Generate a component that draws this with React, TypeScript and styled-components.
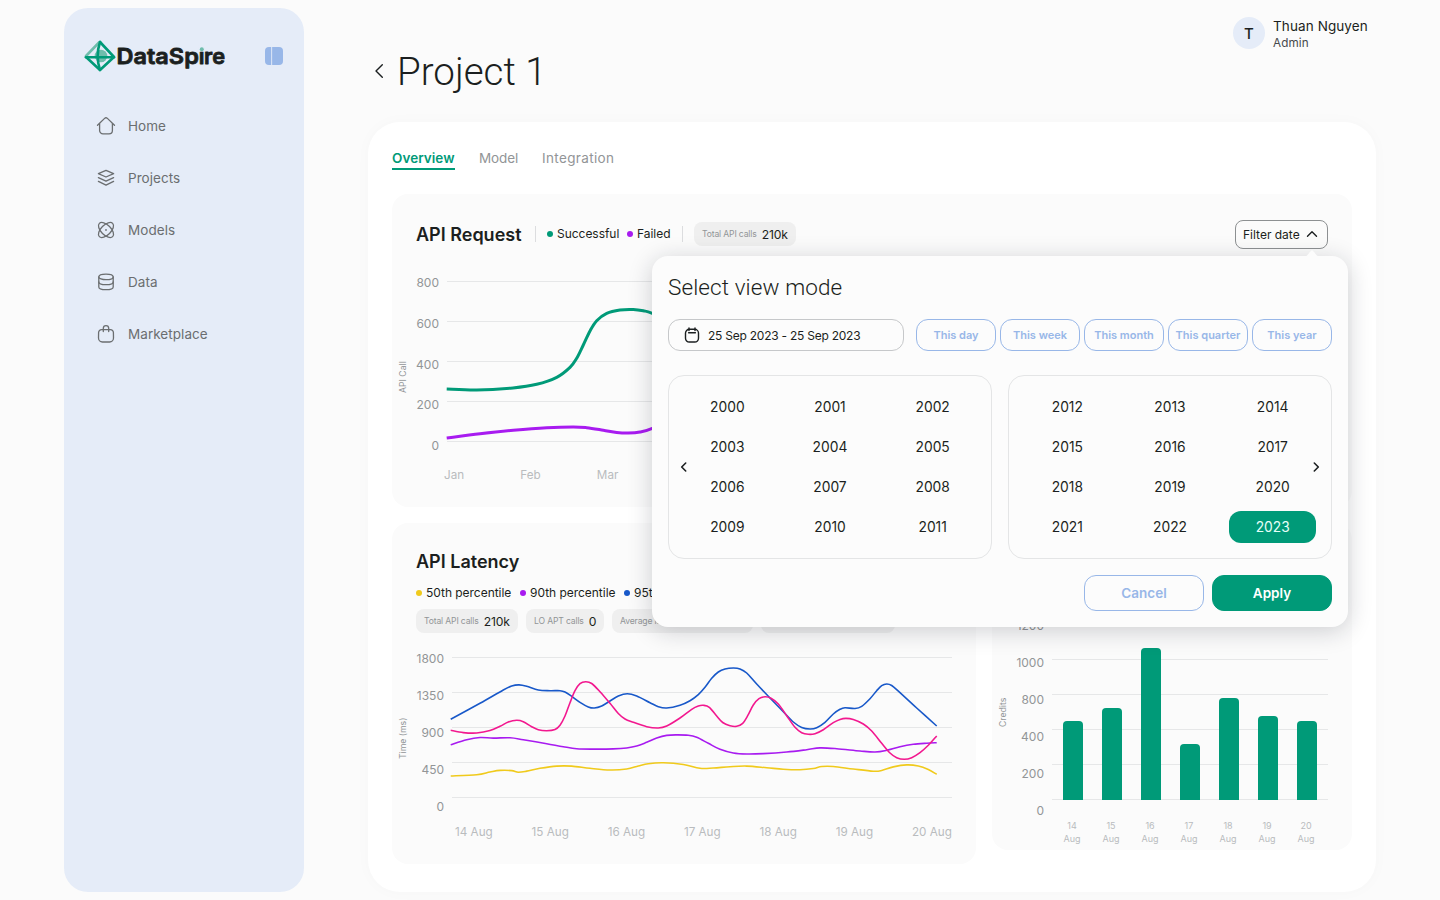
import React from "react";
import styled, { createGlobalStyle, css } from "styled-components";

const c = {
  page: "#fbfbfb",
  ink: "#1b1f20",
  nav: "#6b6e70",
  muted: "#929597",
  faint: "#b9bcbe",
  line: "#e6e7e8",
  green: "#009a78",
  sky: "#98b7e8",
  side: "#e5ecf8",
  purple: "#a81bf0",
  blue: "#1858c9",
  pink: "#f2188f",
  yellow: "#f0ca1c",
};

const GlobalStyle = createGlobalStyle`
  *, *::before, *::after { box-sizing: border-box; }
  html, body { margin: 0; background: ${c.page}; }
  body {
    font-family: Inter, Roboto, "Liberation Sans", sans-serif;
    color: ${c.ink};
    width: 1440px;
    height: 900px;
    overflow: hidden;
  }
  button { font: inherit; color: inherit; background: none; border: 0; padding: 0; margin: 0; }
`;

/* ---------- shell ---------- */

const Shell = styled.div`
  display: flex;
  gap: 64px;
  width: 1440px;
  height: 900px;
  padding: 8px 64px;
`;

const Sidebar = styled.aside`
  width: 240px;
  height: 884px;
  border-radius: 24px;
  background: ${c.side};
  flex: none;
`;

const Brand = styled.div`
  display: flex;
  align-items: center;
  justify-content: space-between;
  height: 32px;
  margin: 32px 20px 0 20px;
`;

const Nav = styled.nav`
  display: flex;
  flex-direction: column;
  gap: 20px;
  margin-top: 38px;
`;

const NavItem = styled.a`
  display: flex;
  align-items: center;
  gap: 12px;
  height: 32px;
  padding-left: 32px;
  font-size: 13.5px;
  letter-spacing: 0.05px;
  color: ${c.nav};
`;

const Main = styled.main`
  width: 1008px;
  flex: none;
`;

const TopBar = styled.header`
  display: flex;
  justify-content: flex-end;
  height: 42px;
  padding: 9px 8px 0 0;
`;

const User = styled.div`
  display: flex;
  gap: 8px;
  width: 135px;
`;

const Avatar = styled.div`
  display: flex;
  align-items: center;
  justify-content: center;
  width: 32px;
  height: 32px;
  border-radius: 50%;
  background: ${c.side};
  font-size: 15px;
  font-weight: 500;
  flex: none;
`;

const UserText = styled.div`
  display: flex;
  flex-direction: column;
  white-space: nowrap;
`;

const UserName = styled.span`
  font-size: 13.5px;
  line-height: 19px;
  letter-spacing: 0.1px;
`;

const UserRole = styled.span`
  font-size: 11.7px;
  line-height: 14px;
  letter-spacing: 0.1px;
  color: #46494b;
`;

const TitleRow = styled.div`
  display: flex;
  align-items: center;
  gap: 13px;
  height: 42px;
  padding-left: 6px;
  margin-bottom: 30px;
`;

const PageTitle = styled.h1`
  margin: 0;
  padding-top: 1px;
  font-family: Roboto, sans-serif;
  font-size: 38.5px;
  font-weight: 300;
  line-height: 42px;
`;

const Panel = styled.section`
  height: 770px;
  padding: 24px;
  border-radius: 32px;
  background: #fff;
  box-shadow: 0 0 16px rgba(0, 0, 0, 0.025);
`;

const Tabs = styled.div`
  display: flex;
  gap: 24px;
  height: 24px;
  margin-bottom: 24px;
`;

const Tab = styled.button<{ $active?: boolean; $w: number; $ls?: number }>`
  width: ${(p) => p.$w}px;
  height: 24px;
  padding-top: 2px;
  font-size: 13.5px;
  line-height: 20px;
  letter-spacing: ${(p) => p.$ls ?? 0}px;
  text-align: left;
  white-space: nowrap;
  color: ${(p) => (p.$active ? c.green : c.muted)};
  font-weight: ${(p) => (p.$active ? 600 : 400)};
  border-bottom: 2px solid ${(p) => (p.$active ? c.green : "transparent")};
`;

/* ---------- cards ---------- */

const Cards = styled.div`
  display: grid;
  grid-template-columns: 584px 360px;
  gap: 16px;
  align-items: start;
`;

const Card = styled.article<{ $h: number; $wide?: boolean }>`
  height: ${(p) => p.$h}px;
  padding: 24px 24px 0;
  border-radius: 16px;
  background: ${c.page};
  ${(p) => p.$wide && css`grid-column: 1 / -1;`}
`;

const CardTitle = styled.h2<{ $w?: number }>`
  margin: 0;
  width: ${(p) => (p.$w ? `${p.$w}px` : "auto")};
  font-size: 18px;
  font-weight: 600;
  line-height: 30px;
  white-space: nowrap;
`;

const CardHead = styled.div`
  display: flex;
  align-items: center;
  height: 32px;
  ${CardTitle} { line-height: 31px; }
`;

const Rule = styled.i`
  width: 1px;
  height: 16px;
  margin-right: 11px;
  background: #dcdddf;
`;

const Legend = styled.div<{ $top?: number }>`
  display: flex;
  gap: 8px;
  margin-top: ${(p) => p.$top ?? 0}px;
`;

const Key = styled.span<{ $color: string; $w: number }>`
  display: flex;
  align-items: center;
  gap: 4px;
  width: ${(p) => p.$w}px;
  font-size: 12px;
  line-height: 16px;
  letter-spacing: -0.03px;
  white-space: nowrap;
  &::before {
    content: "";
    width: 6px;
    height: 6px;
    border-radius: 50%;
    background: ${(p) => p.$color};
    flex: none;
  }
`;

const Chip = styled.span<{ $w: number }>`
  display: flex;
  align-items: center;
  gap: 5px;
  width: ${(p) => p.$w}px;
  height: 24px;
  padding-left: 8px;
  border-radius: 8px;
  background: #efefef;
  font-size: 8.6px;
  letter-spacing: -0.15px;
  color: ${c.muted};
  white-space: nowrap;
  b {
    font-size: 12.2px;
    font-weight: 400;
    color: ${c.ink};
  }
`;

const FilterButton = styled.button`
  display: flex;
  align-items: center;
  justify-content: space-between;
  width: 93px;
  height: 29px;
  margin-left: auto;
  padding: 0 9px 0 7px;
  border: 1px solid #8d9092;
  border-radius: 8px;
  font-size: 12px;
  white-space: nowrap;
`;

const ChartRow = styled.div<{ $top: number }>`
  display: flex;
  margin: ${(p) => p.$top}px -24px 0 -24px;
`;

const AxisTitle = styled.div<{ $h: number }>`
  width: 24px;
  height: ${(p) => p.$h}px;
  padding-right: 1px;
  writing-mode: vertical-rl;
  transform: rotate(180deg);
  text-align: center;
  font-size: 8.7px;
  line-height: 21px;
  color: ${c.muted};
`;

const Ticks = styled.div<{ $w: number; $step: number }>`
  width: ${(p) => p.$w}px;
  margin-right: 8px;
  text-align: right;
  font-size: 12px;
  line-height: ${(p) => p.$step}px;
  color: ${c.muted};
  span { display: block; height: ${(p) => p.$step}px; }
`;

const Plot = styled.svg<{ $top: number }>`
  display: block;
  margin-top: ${(p) => p.$top}px;
  overflow: visible;
  fill: none;
`;

const Days = styled.div<{ $left: number; $right: number; $top: number }>`
  display: flex;
  justify-content: space-between;
  margin: ${(p) => p.$top}px ${(p) => p.$right}px 0 ${(p) => p.$left}px;
  font-size: 11.7px;
  line-height: 16px;
  color: ${c.faint};
`;

const BarDays = styled.div`
  display: flex;
  margin: 19px 0 0 0.5px;
  span {
    width: 39px;
    text-align: center;
    font-size: 9px;
    line-height: 13px;
    color: ${c.faint};
  }
`;

/* ---------- popover ---------- */

const Popover = styled.div`
  position: absolute;
  left: 652px;
  top: 256px;
  width: 696px;
  height: 371px;
  padding: 16px;
  border-radius: 16px;
  background: #fcfcfc;
  box-shadow: 0 4px 24px rgba(20, 24, 40, 0.2);
`;

const Pointer = styled.svg`
  position: absolute;
  right: 27px;
  top: -6px;
`;

const PopTitle = styled.h3`
  margin: 0 0 16px;
  font-family: Roboto, sans-serif;
  font-size: 22.5px;
  font-weight: 300;
  line-height: 31px;
  letter-spacing: 0.1px;
`;

const Row = styled.div<{ $gap: number; $top?: number; $bottom?: number; $end?: boolean }>`
  display: flex;
  gap: ${(p) => p.$gap}px;
  margin: ${(p) => p.$top ?? 0}px 0 ${(p) => p.$bottom ?? 0}px;
  justify-content: ${(p) => (p.$end ? "flex-end" : "flex-start")};
`;

const DateField = styled.div`
  display: flex;
  align-items: center;
  gap: 8px;
  width: 236px;
  height: 32px;
  margin-right: 8px;
  padding-left: 15px;
  border: 1px solid #c6c8ca;
  border-radius: 12px;
  font-size: 12px;
  letter-spacing: -0.24px;
  line-height: 15px;
  white-space: nowrap;
`;

const Preset = styled.button`
  width: 80px;
  height: 32px;
  border: 1px solid ${c.sky};
  border-radius: 12px;
  color: ${c.sky};
  font-size: 11px;
  font-weight: 600;
  white-space: nowrap;
`;

const YearPanel = styled.div`
  position: relative;
  display: grid;
  grid-template-columns: repeat(3, 1fr);
  gap: 8px 16px;
  width: 324px;
  height: 184px;
  padding: 15px;
  border: 1px solid #e4e5e6;
  border-radius: 16px;
  align-content: start;
`;

const Year = styled.button<{ $on: boolean }>`
  height: 32px;
  border-radius: 12px;
  font-size: 13.8px;
  color: ${(p) => (p.$on ? "#e6fff8" : c.ink)};
  background: ${(p) => (p.$on ? c.green : "transparent")};
`;

const Pager = styled.button<{ $side: "left" | "right" }>`
  position: absolute;
  top: 85px;
  ${(p) => p.$side}: 10px;
  display: flex;
  width: 10px;
  height: 12px;
`;

const Action = styled.button<{ $primary?: boolean }>`
  width: 120px;
  height: 36px;
  border-radius: 12px;
  border: 1px solid ${(p) => (p.$primary ? c.green : c.sky)};
  background: ${(p) => (p.$primary ? c.green : "transparent")};
  color: ${(p) => (p.$primary ? "#fff" : c.sky)};
  font-size: 13.5px;
  font-weight: 600;
`;

/* ---------- drawings ---------- */

const NavIcon = ({ children }: { children: React.ReactNode }) => (
  <svg width="20" height="20" viewBox="0 0 20 20" fill="none" stroke={c.nav} strokeWidth="1.3" strokeLinecap="round" strokeLinejoin="round">
    {children}
  </svg>
);

const nav: [string, React.ReactNode][] = [
  ["Home", <><path d="M1.5 9.3 8.6 2.4a2 2 0 0 1 2.8 0l7.1 6.9" /><path d="M3.6 7.6v6.9a3.4 3.4 0 0 0 3.4 3.4h6a3.4 3.4 0 0 0 3.4-3.4V7.6" /></>],
  ["Projects", <><path d="M10 2.4 17.6 5.7 10 9 2.4 5.7z" /><path d="m2.4 9.6 7.6 3.6 7.6-3.6" /><path d="m2.4 13.4 7.6 3.8 7.6-3.8" /></>],
  ["Models", <><ellipse cx="10" cy="10" rx="9.4" ry="5" transform="rotate(45 10 10)" /><ellipse cx="10" cy="10" rx="9.4" ry="5" transform="rotate(-45 10 10)" /><circle cx="10" cy="10" r=".3" /></>],
  ["Data", <><ellipse cx="10" cy="4.9" rx="7.2" ry="2.7" /><path d="M2.8 4.9v10c0 1.5 3.2 2.7 7.2 2.7s7.2-1.2 7.2-2.7v-10" /><path d="M2.8 10c0 1.5 3.2 2.7 7.2 2.7s7.2-1.2 7.2-2.7" /></>],
  ["Marketplace", <><path d="M5.6 5.6h8.8a3 3 0 0 1 3 3l.1 5.5a3.9 3.9 0 0 1-3.9 3.9H6.4a3.9 3.9 0 0 1-3.9-3.9l.1-5.5a3 3 0 0 1 3-3z" /><path d="M7.3 7.6V4.3a2.7 2.7 0 0 1 5.4 0v3.3" /></>],
];

const LogoSvg = styled.svg`
  overflow: visible;
  flex: none;
  text {
    font-family: Inter, sans-serif;
    font-size: 22px;
    font-weight: 600;
  }
`;

const Logo = () => (
  <LogoSvg width="144" height="32" viewBox="84 40 144 32">
    <circle cx="101" cy="56" r="6.3" fill="#6fbdac" />
    <g fill="none" strokeWidth="2.6" strokeLinejoin="round" strokeLinecap="round">
      <path d="M86 57 100 70 114 57 100 42" stroke={c.green} />
      <path d="M86 56 99 42.5" stroke="#6fbdac" />
      <path d="M86 57.2h28" stroke={c.green} />
      <path d="M100 42c-3 9-3 19 0 28" stroke={c.green} />
    </g>
    <text y="64.4" fill={c.ink} stroke={c.ink} strokeWidth=".8" strokeLinejoin="round">
      <tspan x="116.5" textLength="82.3" lengthAdjust="spacingAndGlyphs">DataSp</tspan>
      <tspan x="198.8">i</tspan>
      <tspan x="204" textLength="21" lengthAdjust="spacingAndGlyphs">re</tspan>
    </text>
    <rect x="198.8" y="45" width="5.8" height="6.4" fill={c.side} />
    <circle cx="201.8" cy="49.3" r="2" fill="#6fbdac" />
  </LogoSvg>
);

const ToggleSvg = styled.svg`
  margin-right: 1px;
  flex: none;
`;

const Toggle = () => (
  <ToggleSvg width="18" height="18" viewBox="0 0 18 18" fill={c.sky}>
    <path d="M6.2 0v18H4a4 4 0 0 1-4-4V4a4 4 0 0 1 4-4z" />
    <path d="M7.1 0H14a4 4 0 0 1 4 4v10a4 4 0 0 1-4 4H7.1z" />
  </ToggleSvg>
);

type Pt = [number, number];

/* Catmull-Rom spline through the samples, written as cubic segments. */
const smooth = (flat: number[]) => {
  const p: Pt[] = [];
  for (let i = 0; i < flat.length; i += 2) p.push([flat[i], flat[i + 1]]);
  let d = `M${p[0][0]} ${p[0][1]}`;
  for (let i = 0; i < p.length - 1; i++) {
    const a = p[i - 1] || p[i], b = p[i], e = p[i + 1], f = p[i + 2] || e;
    d += `C${b[0] + (e[0] - a[0]) / 6} ${b[1] + (e[1] - a[1]) / 6} ${e[0] - (f[0] - b[0]) / 6} ${e[1] - (f[1] - b[1]) / 6} ${e[0]} ${e[1]}`;
  }
  return d;
};

const success = [446.7,388.9,476.7,390,513,387.9,536.7,384.3,556.7,377.3,570,367.3,576.7,358.3,583.3,345,590,331,596.7,320.7,606.7,313.3,620,310,633.3,309.5,643.3,310.8,652.3,313.3,680,326,730,350];
const failed = [446.7,438,480,433.8,513.3,430.3,546.7,427.7,573.3,426.9,586.7,427.7,603.3,430.2,616.7,432.4,628.3,433,640,432,652.3,428.3,680,415,730,400];

const p95 = [450.7,719.3,480,703.3,503.3,690,511.7,686,519,684.9,526.7,686.3,538.3,690,550,690.7,560,690.7,565,692,571.7,696.3,580,702.3,588.3,706.9,594.3,708,601.7,706,610,701,618.3,696,627.3,693.7,636.7,696,650,702.7,658.3,706.7,666.7,708,680,705.2,690,700.7,698.3,694.6,705,687.3,711.7,678.3,718.3,672,725,669,733.3,668,740,668.9,746.7,673,756.7,684,770,698,783.3,711.7,793.3,722,801.7,727.4,810,729,816.7,727.7,825,722.3,833.3,714,840,709.3,845,707.8,855,708.5,861.7,706.3,870,698.7,876.7,690.7,881.7,685.7,886.7,684,891.7,685.5,900,692.7,916.7,708,936.7,726];
const p99 = [450.7,730.3,463.3,732.6,476.7,733,490,730.6,500,726.3,508.3,722,516.7,720.3,523.3,721.7,531.7,726.7,538.3,729.7,546.7,730.7,555,729.5,560,725.3,565,716,570,702.7,575,690.7,580,683.7,585.7,681.8,591.7,683.5,600,691.7,610,703.3,618.3,713.5,625,719,633.3,722.3,646.7,726.7,658.3,728,666.7,726,680,718,691.7,709.3,698.3,706,703.3,705.3,709.3,707.3,716.7,716,722.7,722.5,730,725.7,736.7,726.3,742.7,723.3,747.7,715.7,753.3,705,759,698.7,765,696.8,771,698.2,778.3,704,786.7,715.7,795,727.3,801.7,732.7,808.3,734.3,815,733.7,823.3,729.7,833.3,722.6,840,719.4,846,718.4,853.3,719.5,863.3,724,871.7,731,881.7,743.3,890,753,896.7,757.7,904.3,759.3,911.7,757.7,920,752.7,928.3,745.3,936.7,736];
const p90 = [450.7,744.7,466.7,739.7,480,737.5,493.3,738.1,510,737.8,523.3,739.7,546.7,743.7,563.3,746.7,576.7,748.7,593.3,749.1,613.3,748.9,626.7,748,636.7,746.1,646.7,742.3,656.7,738,666.7,735.4,676.7,734.9,688.3,735.3,696.7,737.3,708.3,743.3,720,749.3,733.3,753,746.7,754,763.3,753.6,786.7,752,806.7,749.7,820,747.9,836.7,748.7,860,751,875,752,886.7,750.3,900,746.7,913.3,744.3,926.7,743.2,936.7,742.7];
const p50 = [450.7,776,476.7,774.7,490,772,500,770.4,511.7,770.6,518.3,772.2,526.7,771.1,540,768.3,556.7,766.1,571.7,766.1,590,768.3,610,770,626.7,769,638.3,766,648.3,763.7,663.3,762.8,683.3,764.5,700,768.3,713.3,768,730,766.7,746.7,766.1,766.7,767.7,783.3,769.2,800,769.7,813.3,768.5,821.7,766.5,833.3,766.5,853.3,769,873.3,771.2,881.7,770.5,893.3,766.9,906.7,764.9,918.3,766,928.3,769.5,936.7,774.3];

const Grid = ({ x1, x2, ys }: { x1: number; x2: number; ys: number[] }) => (
  <g stroke={c.line} strokeWidth="1">
    {ys.map((y) => <path key={y} d={`M${x1} ${y + 0.5}H${x2}`} />)}
  </g>
);

const bars = [721, 708, 648, 744, 698, 716, 721];
const days = [14, 15, 16, 17, 18, 19, 20];
const months = ["Jan", "Feb", "Mar", "Apr", "May", "Jun", "Jul", "Aug", "Sep", "Oct", "Nov", "Dec"];
const years = (from: number) => Array.from({ length: 12 }, (_, i) => from + i);

const Chevron = ({ d, w, h, sw }: { d: string; w: number; h: number; sw: number }) => (
  <svg width={w} height={h} viewBox={`0 0 ${w} ${h}`} fill="none" stroke={c.ink} strokeWidth={sw} strokeLinecap="round" strokeLinejoin="round">
    <path d={d} />
  </svg>
);

export default function App() {
  return (
    <>
      <GlobalStyle />
      <Shell>
        <Sidebar>
          <Brand>
            <Logo />
            <Toggle />
          </Brand>
          <Nav>
            {nav.map(([label, icon]) => (
              <NavItem key={label}><NavIcon>{icon}</NavIcon>{label}</NavItem>
            ))}
          </Nav>
        </Sidebar>
        <Main>
          <TopBar>
            <User>
              <Avatar>T</Avatar>
              <UserText>
                <UserName>Thuan Nguyen</UserName>
                <UserRole>Admin</UserRole>
              </UserText>
            </User>
          </TopBar>
          <TitleRow>
            <Chevron w={10} h={16} sw={1.4} d="M8.3 1.7 2 8l6.3 6.3" />
            <PageTitle>Project 1</PageTitle>
          </TitleRow>
          <Panel>
            <Tabs>
              <Tab $active $w={63} $ls={0.05}>Overview</Tab>
              <Tab $w={39} $ls={-0.1}>Model</Tab>
              <Tab $w={73} $ls={0.35}>Integration</Tab>
            </Tabs>
            <Cards>
              <Card $wide $h={313}>
                <CardHead>
                  <CardTitle $w={119}>API Request</CardTitle>
                  <Rule />
                  <Legend>
                    <Key $color={c.green} $w={72}>Successful</Key>
                    <Key $color={c.purple} $w={55}>Failed</Key>
                  </Legend>
                  <Rule />
                  <Chip $w={102}>Total API calls <b>210k</b></Chip>
                  <FilterButton>
                    Filter date
                    <Chevron w={12} h={8} sw={1.4} d="M1.5 6.3 6 1.8l4.5 4.5" />
                  </FilterButton>
                </CardHead>
                <ChartRow $top={13}>
                  <AxisTitle $h={228}>API Call</AxisTitle>
                  <Ticks $w={23} $step={40.75}>
                    {[800, 600, 400, 200, 0].map((t) => <span key={t}>{t}</span>)}
                  </Ticks>
                  <div>
                    <Plot $top={18} width="881" height="161" viewBox="447 281 881 161">
                      <Grid x1={447} x2={1328} ys={[281, 321, 361, 401, 441]} />
                      <path d={smooth(success)} stroke={c.green} strokeWidth="3" />
                      <path d={smooth(failed)} stroke={c.purple} strokeWidth="3" />
                    </Plot>
                    <Days $left={-3} $right={17} $top={25}>
                      {months.map((m) => <span key={m}>{m}</span>)}
                    </Days>
                  </div>
                </ChartRow>
              </Card>
              <Card $h={341}>
                <CardTitle>API Latency</CardTitle>
                <Legend $top={8}>
                  <Key $color={c.yellow} $w={96}>50th percentile</Key>
                  <Key $color={c.purple} $w={96}>90th percentile</Key>
                  <Key $color={c.blue} $w={96}>95th percentile</Key>
                  <Key $color={c.pink} $w={96}>99th percentile</Key>
                </Legend>
                <Row $gap={8} $top={8}>
                  <Chip $w={102}>Total API calls <b>210k</b></Chip>
                  <Chip $w={78}>LO APT calls <b>0</b></Chip>
                  <Chip $w={141}>Average latency <b>210ms</b></Chip>
                  <Chip $w={134}>Median latency <b>210ms</b></Chip>
                </Row>
                <ChartRow $top={7}>
                  <AxisTitle $h={196}>Time (ms)</AxisTitle>
                  <Ticks $w={28} $step={37}>
                    {[1800, 1350, 900, 450, 0].map((t) => <span key={t}>{t}</span>)}
                  </Ticks>
                  <div>
                    <Plot $top={17} width="500" height="141" viewBox="452 657 500 141">
                      <Grid x1={452} x2={952} ys={[657, 692, 727, 762, 797]} />
                      <g strokeWidth="1.6">
                        <path d={smooth(p50)} stroke={c.yellow} />
                        <path d={smooth(p90)} stroke={c.purple} />
                        <path d={smooth(p95)} stroke={c.blue} />
                        <path d={smooth(p99)} stroke={c.pink} />
                      </g>
                    </Plot>
                    <Days $left={3} $right={0} $top={26}>
                      {days.map((d) => <span key={d}>{d} Aug</span>)}
                    </Days>
                  </div>
                </ChartRow>
              </Card>
              <Card $h={327}>
                <CardTitle>Credit usage</CardTitle>
                <ChartRow $top={30}>
                  <AxisTitle $h={210}>Credits</AxisTitle>
                  <Ticks $w={28} $step={37}>
                    {[1200, 1000, 800, 400, 200, 0].map((t) => <span key={t}>{t}</span>)}
                  </Ticks>
                  <div>
                    <Plot $top={17} width="276" height="176" viewBox="1052 624 276 176">
                      <Grid x1={1052} x2={1328} ys={[624, 659, 694, 729, 764, 799]} />
                      {bars.map((y, i) => {
                        const x = 1063 + i * 39;
                        return <path key={x} fill={c.green} d={`M${x} 800V${y + 4}a4 4 0 0 1 4-4h12a4 4 0 0 1 4 4V800z`} />;
                      })}
                    </Plot>
                    <BarDays>
                      {days.map((d) => <span key={d}>{d}<br />Aug</span>)}
                    </BarDays>
                  </div>
                </ChartRow>
              </Card>
            </Cards>
          </Panel>
        </Main>
      </Shell>
      <Popover>
        <Pointer width="18" height="7" viewBox="0 0 18 7" fill="#fcfcfc">
          <path d="M0 7c3 0 4.5-1.6 6.5-4.4C7.6 1 8.2.4 9 .4s1.4.6 2.5 2.2C13.5 5.4 15 7 18 7z" />
        </Pointer>
        <PopTitle>Select view mode</PopTitle>
        <Row $gap={4}>
          <DateField>
            <svg width="16" height="16" viewBox="0 0 16 16" fill="none" stroke={c.ink} strokeWidth="1.4" strokeLinecap="round">
              <rect x="1.5" y="2.3" width="13" height="12.7" rx="3.8" />
              <path d="M5 .9v2.6M11 .9v2.6M4.6 5.8h6.8" />
            </svg>
            25 Sep 2023 - 25 Sep 2023
          </DateField>
          {["This day", "This week", "This month", "This quarter", "This year"].map((t) => (
            <Preset key={t}>{t}</Preset>
          ))}
        </Row>
        <Row $gap={16} $top={24} $bottom={16}>
          <YearPanel>
            {years(2000).map((y) => <Year key={y} $on={false}>{y}</Year>)}
            <Pager $side="left"><Chevron w={10} h={12} sw={1.6} d="M6.7 2 2.7 6l4 4" /></Pager>
          </YearPanel>
          <YearPanel>
            {years(2012).map((y) => <Year key={y} $on={y === 2023}>{y}</Year>)}
            <Pager $side="right"><Chevron w={10} h={12} sw={1.6} d="m3.3 2 4 4-4 4" /></Pager>
          </YearPanel>
        </Row>
        <Row $gap={8} $end>
          <Action>Cancel</Action>
          <Action $primary>Apply</Action>
        </Row>
      </Popover>
    </>
  );
}
